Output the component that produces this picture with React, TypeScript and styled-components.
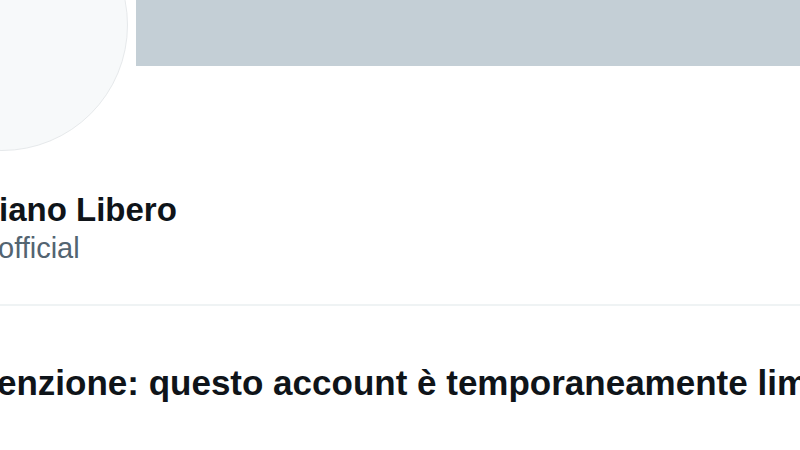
import React from "react";
import styled, { createGlobalStyle } from "styled-components";

const Global = createGlobalStyle`
  html, body { margin: 0; padding: 0; background: #ffffff; }
  body { font-family: "Liberation Sans", Arial, sans-serif; }
`;

const Page = styled.div`
  position: relative;
  width: 800px;
  height: 450px;
  overflow: hidden;
  background: #ffffff;
  display: flex;
  flex-direction: column;
`;

const Banner = styled.div`
  margin-left: 136px;
  height: 66px;
  background: #c4cfd6;
  flex-shrink: 0;
`;

const Avatar = styled.div`
  position: absolute;
  left: -124px;
  top: -101px;
  width: 252px;
  height: 252px;
  border-radius: 50%;
  background: #f7f9fa;
  border: 1.5px solid #e6e9eb;
  box-sizing: border-box;
`;

const Info = styled.div`
  display: flex;
  flex-direction: column;
  padding-top: 124px;
`;

const Name = styled.div`
  font-size: 33px;
  line-height: 40px;
  font-weight: 700;
  color: #0f1419;
  margin-left: -1px;
  white-space: nowrap;
`;

const Handle = styled.div`
  margin-top: 1px;
  font-size: 29px;
  line-height: 34px;
  color: #536471;
  margin-left: -2px;
  white-space: nowrap;
`;

const Divider = styled.div`
  margin-top: 39px;
  height: 2px;
  background: #eff3f4;
`;

const Headline = styled.div`
  margin-top: 56px;
  font-size: 35px;
  line-height: 42px;
  font-weight: 700;
  color: #0f1419;
  margin-left: -3px;
  white-space: nowrap;
`;

export default function App() {
  return (
    <>
      <Global />
      <Page>
        <Banner />
        <Avatar />
        <Info>
          <Name>iano Libero</Name>
          <Handle>official</Handle>
        </Info>
        <Divider />
        <Headline>enzione: questo account è temporaneamente lim</Headline>
      </Page>
    </>
  );
}
